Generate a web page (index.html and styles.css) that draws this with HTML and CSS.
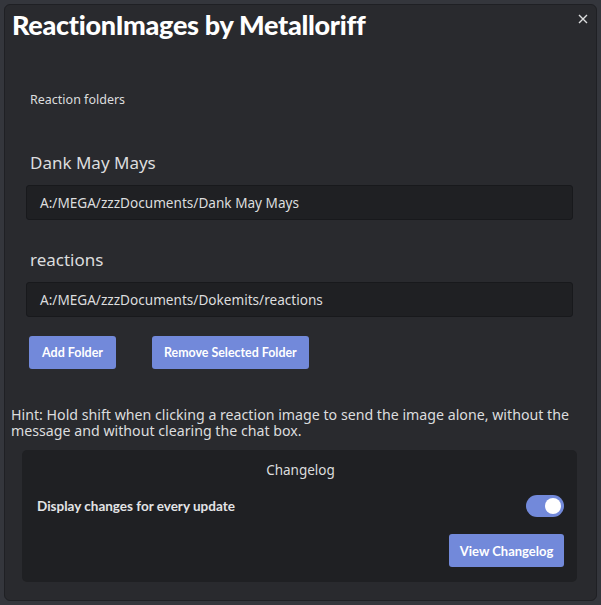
FILE: index.html
```html
<!DOCTYPE html>
<html>
<head>
<meta charset="utf-8">
<link rel="stylesheet" href="styles.css">
</head>
<body>
<div class="modal">
  <div class="header">
    <h1 class="title">ReactionImages by Metalloriff</h1>
    <button class="close" aria-label="Close">
      <svg width="10" height="10" viewBox="0 0 10 10"><path d="M1 1L9 9M9 1L1 9" stroke="#dcddde" stroke-width="1.4" fill="none"/></svg>
    </button>
  </div>
  <div class="content">
    <div class="section-label">Reaction folders</div>
    <div class="folder">
      <div class="folder-name">Dank May Mays</div>
      <div class="input">A:/MEGA/zzzDocuments/Dank May Mays</div>
    </div>
    <div class="folder">
      <div class="folder-name">reactions</div>
      <div class="input">A:/MEGA/zzzDocuments/Dokemits/reactions</div>
    </div>
    <div class="buttons">
      <button class="btn">Add Folder</button>
      <button class="btn btn-remove">Remove Selected Folder</button>
    </div>
  </div>
  <p class="hint">Hint: Hold shift when clicking a reaction image to send the image alone, without the message and without clearing the chat box.</p>
  <div class="changelog">
    <div class="cl-title">Changelog</div>
    <div class="cl-row">
      <span class="cl-label">Display changes for every update</span>
      <span class="toggle"><span class="knob"></span></span>
    </div>
    <div class="cl-actions">
      <button class="btn btn-wide">View Changelog</button>
    </div>
  </div>
</div>
</body>
</html>
```
FILE: styles.css
```css
html, body {
  margin: 0;
  padding: 0;
}
body {
  background: #34363c;
  width: 601px;
  height: 605px;
  padding: 4px;
  box-sizing: border-box;
  font-family: "Noto Sans", "Open Sans", sans-serif;
  color: #dcddde;
}
.modal {
  background: #292a2e;
  border: 1px solid #1f2024;
  border-radius: 6px;
  height: 597px;
  box-sizing: border-box;
  padding: 0 0 0 6px;
}
.header {
  display: flex;
  justify-content: space-between;
  align-items: flex-start;
}
.title {
  margin: 3px 0 0 1px;
  font-family: "Lato", sans-serif;
  font-weight: 900;
  font-size: 27px;
  color: #ffffff;
  letter-spacing: -0.3px;
}
.close {
  background: none;
  border: 0;
  padding: 0;
  margin: 9px 8px 0 0;
  width: 10px;
  height: 10px;
  display: flex;
}
.content {
  padding: 0 23px 0 19px;
}
.section-label {
  margin-top: 50px;
  font-size: 12.5px;
  color: #dcddde;
}
.folder-name {
  margin-top: 43px;
  font-size: 17px;
  color: #dcddde;
  line-height: 24px;
}
.folder + .folder .folder-name {
  margin-top: 28px;
}
.input {
  margin-top: 10px;
  margin-left: -4px;
  height: 35px;
  box-sizing: border-box;
  background: #1f2023;
  border: 1px solid #18191c;
  border-radius: 3px;
  padding: 0 0 0 13px;
  display: flex;
  align-items: center;
  font-size: 13.6px;
  color: #dcddde;
}
.buttons {
  display: flex;
  gap: 36px;
  margin-top: 19px;
  margin-left: -1px;
}
.btn {
  background: #7289da;
  color: #ffffff;
  border: 0;
  border-radius: 3px;
  height: 33px;
  padding: 0 13px;
  font-family: "Lato", sans-serif;
  font-weight: 700;
  font-size: 12.5px;
  white-space: nowrap;
}
.btn-remove {
  padding: 0 12px;
  font-size: 12.4px;
}
.hint {
  margin: 38px 0 0 0;
  font-size: 14.2px;
  line-height: 16px;
  color: #dcddde;
}
.changelog {
  margin: 11px 19px 0 11px;
  background: #1f2023;
  border-radius: 5px;
  padding: 11px 13px 15px 15px;
}
.cl-title {
  text-align: center;
  font-size: 13.5px;
  line-height: 18px;
}
.cl-row {
  margin-top: 16px;
  display: flex;
  justify-content: space-between;
  align-items: center;
}
.cl-label {
  font-family: "Lato", sans-serif;
  font-weight: 700;
  font-size: 13.5px;
  color: #e3e4e6;
}
.toggle {
  width: 38px;
  height: 22px;
  border-radius: 11px;
  background: #7289da;
  display: flex;
  align-items: center;
  justify-content: flex-end;
  padding-right: 3px;
  box-sizing: border-box;
}
.knob {
  width: 16px;
  height: 16px;
  border-radius: 50%;
  background: #ffffff;
}
.cl-actions {
  margin-top: 17px;
  display: flex;
  justify-content: flex-end;
}
.btn-wide {
  width: 115px;
  padding: 0;
  font-size: 13px;
}
```
